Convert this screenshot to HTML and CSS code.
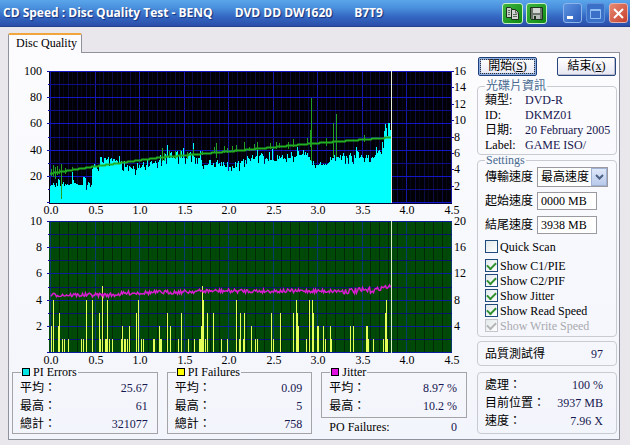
FILE: index.html
```html
<!DOCTYPE html>
<html lang="zh-Hant">
<head>
    <meta charset="UTF-8">
    <title>CD Speed : Disc Quality Test</title>
    <link rel="stylesheet" href="styles.css">
</head>
<body>
<div class="window">
    <header class="titlebar">
        <h1><span>CD Speed : Disc Quality Test - BENQ</span><span>DVD DD DW1620</span><span>B7T9</span></h1>
        <div class="tools">
            <button type="button" class="tool" aria-label="Copy">
                <svg width="15" height="15" viewBox="0 0 15 15">
                    <path d="M1.500 1.500h4l2 2v8h-6z" fill="#c9cdc9" stroke="#1d331d"/>
                    <path d="M6.500 3.500h4l3 3v7h-7z" fill="#d4d6d4" stroke="#1d331d"/>
                    <path d="M3 4.500h2M3 6.500h2M3 8.500h2M8 8.500h4M8 10.500h4M10.500 4v3h3" fill="none" stroke="#5c6a5c"/>
                </svg>
            </button>
            <button type="button" class="tool" aria-label="Save">
                <svg width="15" height="15" viewBox="0 0 15 15">
                    <path d="M1.500 1.500h12v12h-11l-1-1z" fill="#6c756c" stroke="#1d331d"/>
                    <path d="M4 2h7v5H4z" fill="#d4d6d4"/>
                    <path d="M4 9h7v4H4z" fill="#b9bdb9"/>
                    <path d="M5 10h2v3H5z" fill="#1d331d"/>
                </svg>
            </button>
        </div>
        <div class="controls">
            <button type="button" class="ctl" aria-label="Minimize">
                <svg width="17" height="17" viewBox="0 0 17 17"><path d="M3 11h6v3H3z" fill="#fff"/></svg>
            </button>
            <button type="button" class="ctl max" aria-label="Maximize">
                <svg width="17" height="17" viewBox="0 0 17 17"><path d="M3.500 4.500h10v9h-10zM3 5.500h11" fill="none" stroke="#8fbdf2"/></svg>
            </button>
            <button type="button" class="ctl close" aria-label="Close">
                <svg width="17" height="17" viewBox="0 0 17 17"><path d="M4 4l9 9M13 4l-9 9" stroke="#fff" stroke-width="2"/></svg>
            </button>
        </div>
    </header>

    <nav class="tabs"><a href="#panel">Disc Quality</a></nav>

    <main class="panel" id="panel">
        <section class="left">
            <svg id="chart" viewBox="0 0 455 312"></svg>
            <div class="stats">
                <fieldset>
                    <legend><i class="key cyan"></i>PI Errors</legend>
                    <dl>
                        <div><dt>平均：</dt><dd>25.67</dd></div>
                        <div><dt>最高：</dt><dd>61</dd></div>
                        <div><dt>總計：</dt><dd>321077</dd></div>
                    </dl>
                </fieldset>
                <fieldset>
                    <legend><i class="key yellow"></i>PI Failures</legend>
                    <dl>
                        <div><dt>平均：</dt><dd>0.09</dd></div>
                        <div><dt>最高：</dt><dd>5</dd></div>
                        <div><dt>總計：</dt><dd>758</dd></div>
                    </dl>
                </fieldset>
                <div>
                    <fieldset class="jitter">
                        <legend><i class="key pink"></i>Jitter</legend>
                        <dl>
                            <div><dt>平均：</dt><dd>8.97 %</dd></div>
                            <div><dt>最高：</dt><dd>10.2 %</dd></div>
                        </dl>
                    </fieldset>
                    <dl class="po">
                        <div><dt>PO Failures:</dt><dd>0</dd></div>
                    </dl>
                </div>
            </div>
        </section>

        <aside class="side">
            <div class="buttons">
                <button type="button" class="btn default">開始(<u>S</u>)</button>
                <button type="button" class="btn">結束(<u>x</u>)</button>
            </div>
            <fieldset class="group info">
                <legend>光碟片資訊</legend>
                <dl>
                    <dt>類型:</dt><dd>DVD-R</dd>
                    <dt>ID:</dt><dd>DKMZ01</dd>
                    <dt>日期:</dt><dd>20 February 2005</dd>
                    <dt>Label:</dt><dd>GAME ISO/</dd>
                </dl>
            </fieldset>
            <fieldset class="group settings">
                <legend>Settings</legend>
                <div class="field">
                    <label for="speed">傳輸速度</label>
                    <div class="select">
                        <select id="speed"><option>最高速度</option></select>
                        <span class="arrow"><svg width="9" height="7" viewBox="0 0 9 7"><path d="M1 1l3.500 3.500L8 1" fill="none" stroke="#4d6185" stroke-width="2"/></svg></span>
                    </div>
                </div>
                <div class="field">
                    <label for="start">起始速度</label>
                    <input type="text" id="start" value="0000 MB">
                </div>
                <div class="field">
                    <label for="end">結尾速度</label>
                    <input type="text" id="end" value="3938 MB">
                </div>
                <label class="check quick"><input type="checkbox">Quick Scan</label>
                <label class="check"><input type="checkbox" checked>Show C1/PIE</label>
                <label class="check"><input type="checkbox" checked>Show C2/PIF</label>
                <label class="check"><input type="checkbox" checked>Show Jitter</label>
                <label class="check"><input type="checkbox" checked>Show Read Speed</label>
                <label class="check off"><input type="checkbox" checked disabled>Show Write Speed</label>
            </fieldset>
            <dl class="group score">
                <div><dt>品質測試得</dt><dd>97</dd></div>
            </dl>
            <dl class="group progress">
                <div><dt>處理：</dt><dd>100 %</dd></div>
                <div><dt>目前位置：</dt><dd>3937 MB</dd></div>
                <div><dt>速度：</dt><dd>7.96 X</dd></div>
            </dl>
        </aside>
    </main>
</div>
<script src="chart.js"></script>
</body>
</html>
```
FILE: styles.css
```css
*{
    margin: 0;
    padding: 0;
    box-sizing: border-box;
}
body{
    font: 12px/14px "Liberation Serif", "Noto Sans CJK TC", serif;
    color: #000;
    background: #e9e7ec;
}
button, input, select{
    font: inherit;
    color: inherit;
}
fieldset{
    min-width: 0;
}
.window{
    min-height: 100vh;
    border-bottom: 1px solid #2f3d94;
}

/* title bar */
.titlebar{
    display: flex;
    align-items: center;
    height: 27px;
    padding: 0 2px 0 3px;
    background: linear-gradient(#5aa5ea, #4a90dd 30%, #3467c2 65%, #2a4da8);
    border-bottom: 1px solid #25408f;
}
.titlebar h1{
    display: flex;
    flex: 1;
    gap: 22px;
    font: bold 12px/20px "Open Sans", sans-serif;
    color: #fff;
    white-space: nowrap;
    text-shadow: 1px 1px 1px #14317c;
}
.tools, .controls{
    display: flex;
    gap: 3px;
}
.tools{
    margin-right: 16px;
}
.controls{
    gap: 4px;
}
.tool, .ctl{
    display: flex;
    align-items: center;
    justify-content: center;
    width: 21px;
    height: 21px;
    border: 1px solid #c8f0c8;
    border-radius: 3px;
    background: linear-gradient(135deg, #3fb53f, #0d8a12);
}
.ctl{
    width: 19px;
    height: 20px;
    border-color: #8db4ea;
    background: linear-gradient(135deg, #5c93e0, #2b5bba);
}
.ctl.max{
    border-color: #5f8fd8;
    background: #3a70c8;
}
.ctl.close{
    border-color: #e3b0b0;
    background: linear-gradient(135deg, #e58a72, #c8402c);
}

/* tab + panel */
.tabs{
    display: flex;
    padding: 6px 0 0 8px;
}
.tabs a{
    position: relative;
    z-index: 1;
    height: 20px;
    margin-bottom: -1px;
    padding: 1px 4px 0 7px;
    border: 1px solid #8f929c;
    border-top: 2px solid #f0a63c;
    border-bottom: 0;
    border-radius: 2px 2px 0 0;
    background: #fcfcfe;
    color: #000;
    line-height: 15px;
    text-decoration: none;
}
.panel{
    display: grid;
    grid-template-columns: 1fr 140px;
    gap: 10px;
    margin: 0 10px 6px 8px;
    padding: 0 2px 3px 3px;
    border: 1px solid #8f929c;
    background: linear-gradient(#fcfcfe, #f3f5fc);
}
#chart{
    display: block;
    width: 100%;
    overflow: visible;
}
#chart text{
    font-size: 12px;
}

/* results under the charts */
.stats{
    display: grid;
    grid-template-columns: repeat(3, 1fr);
    align-items: start;
    gap: 9px;
}
.stats fieldset{
    border: 1px solid #a3a3a8;
}
.stats legend{
    display: flex;
    align-items: center;
    gap: 3px;
    margin-left: 8px;
    padding: 0 1px;
}
.key{
    width: 8px;
    height: 8px;
    border: 1px solid #000;
}
.cyan{ background: #00e4e4; }
.yellow{ background: #ff0; }
.pink{ background: #e010e0; }
.stats dl, .progress, .score{
    line-height: 18px;
}
.stats dl{
    padding: 0 9px 0 7px;
}
.stats dl div, .progress div, .score div{
    display: flex;
    justify-content: space-between;
}
.stats .jitter{
    padding-bottom: 2px;
}
.stats .po{
    padding: 0 10px 0 8px;
}
dd{
    color: #17174f;
}

/* right column */
.side{
    padding-top: 4px;
}
.buttons{
    display: flex;
    justify-content: space-between;
    padding: 0 1px;
}
.btn{
    width: 59px;
    height: 19px;
    border: 1px solid #26457c;
    border-radius: 2px;
    background: linear-gradient(#fff, #e6e6f2);
    box-shadow: inset -1px -1px #b9bccf;
    line-height: 15px;
}
.btn.default{
    border-color: #1f3f7c;
    box-shadow: inset 0 0 0 2px #8fb0e0;
    outline: 1px dotted #333;
    outline-offset: -3px;
}
.group{
    border: 1px solid #c9cbd3;
    border-radius: 4px;
    padding: 0 7px;
}
.group legend{
    padding: 0 1px;
    color: #48698f;
}
.info{
    margin-top: 3px;
    padding-bottom: 1px;
}
.info dl{
    display: grid;
    grid-template-columns: 40px 1fr;
    line-height: 15px;
    white-space: nowrap;
}
.settings{
    margin-top: -2px;
    padding-bottom: 3px;
}
.field{
    display: flex;
    align-items: center;
    height: 20px;
    margin-bottom: 4px;
}
.field label{
    width: 52px;
}
.field input{
    width: 60px;
    height: 18px;
    padding: 0 3px;
    border: 1px solid #9a9aa0;
    background: #fff;
}
.select{
    position: relative;
    width: 71px;
}
.select select{
    display: block;
    appearance: none;
    width: 100%;
    height: 20px;
    padding: 0 0 0 3px;
    border: 1px solid #9a9aa0;
    border-radius: 0;
    background: #fff;
}
.arrow{
    position: absolute;
    top: 1px;
    right: 1px;
    display: flex;
    align-items: center;
    justify-content: center;
    width: 16px;
    height: 18px;
    border: 1px solid #9fb2d4;
    background: linear-gradient(#dfe8fa, #b8c9ea);
    pointer-events: none;
}
.check{
    display: flex;
    align-items: center;
    gap: 2px;
    height: 15px;
    white-space: nowrap;
}
.check.quick{
    margin-bottom: 4px;
}
.check input{
    appearance: none;
    display: grid;
    place-items: center;
    width: 13px;
    height: 13px;
    border: 1px solid #1f4a7c;
    background: linear-gradient(135deg, #e2e8ea, #fff);
}
.check input:checked::after{
    content: "";
    width: 7px;
    height: 4px;
    margin-bottom: 2px;
    border: solid #2f8f2f;
    border-width: 0 0 2px 2px;
    transform: rotate(-45deg);
}
.check.off{
    color: #a9a9ae;
}
.check.off input{
    border-color: #c4c4ca;
}
.check.off input::after{
    border-color: #b4b4b8;
}
.score{
    margin-top: 4px;
    padding: 3px 13px 2px 7px;
}
.progress{
    margin-top: 6px;
    padding: 3px 13px 3px 7px;
}
```
FILE: chart.js
```js
var svg=document.getElementById('chart');
var X0=38, STEP=89, RIGHT=440, END=379;

function add(name, attrs, text){
    var el=document.createElementNS('http://www.w3.org/2000/svg', name);
    for(var k in attrs){
        el.setAttribute(k, attrs[k]);
    }
    if(text!==undefined){
        el.textContent=text;
    }
    svg.appendChild(el);
}
function rect(x, y, w, h, fill){
    add('rect', {x:x, y:y, width:w, height:h, fill:fill});
}
function label(x, y, text, anchor){
    add('text', {x:x, y:y, 'text-anchor':anchor}, text);
}
function path(d, color){
    add('path', {d:d, fill:'none', stroke:color});
}
// repeatable noise, 0..1
var seed=7;
function rnd(){
    seed=(seed*16807)%2147483647;
    return seed/2147483647;
}
// value at x on a polyline [[x,y],...]
function at(pts, x){
    for(var i=1; i<pts.length; i++){
        if(x<=pts[i][0]){
            var a=pts[i-1], b=pts[i];
            return a[1]+(b[1]-a[1])*(x-a[0])/(b[0]-a[0]);
        }
    }
    return pts[pts.length-1][1];
}
// plot background, grid and axis labels
function frame(o){
    var i, x, y;
    rect(X0-1, o.top, RIGHT-X0+1, 132, o.bg);
    for(i=0; i<=90; i++){
        x=Math.round(X0+i*STEP/20);
        if(x<RIGHT){
            rect(x, o.top, 1, 132, i%10==0 ? o.major : i%2==0 ? o.minor : o.faint);
        }
    }
    for(i=0; i<=10; i++){
        y=o.top+Math.round(i*13.1);
        rect(X0-1, y, RIGHT-X0+1, 1, i%2==0 ? o.row : o.rowMinor);
        rect(X0-(i%2==0 ? 3 : 2), y, 2, 1, '#1010a0');
    }
    for(i=0; i<5; i++){
        label(30, o.top+4+Math.round(i*26.2), o.left[i], 'end');
    }
    for(i=0; i<o.right.length; i++){
        y=o.top+Math.round(i*131/o.right.length);
        label(442, y+4, o.right[i], 'start');
        if(o.ticks){
            rect(RIGHT, y, 2, 1, '#1010a0');
        }
    }
    for(i=0; i<=9; i++){
        label(Math.round(X0+1+i*STEP/2), o.top+143, (i/2).toFixed(1), 'middle');
    }
}

/* PI errors + read speed */
frame({
    top:18, bg:'#000006', major:'#1818a0', minor:'#0c0c44', faint:'#06061c',
    row:'#1414c8', rowMinor:'#0e0e88', ticks:true,
    left:[100,80,60,40,20], right:[16,14,12,10,8,6,4,2]
});
var env=[[38,15],[79,16],[80,28],[92,33],[103,34],[112,30],[126,27],[140,31],[154,36],[170,36],[188,36],
    [190,30],[222,29],[236,33],[245,37],[262,34],[280,37],[296,38],[300,31],[314,31],[320,36],[345,36],
    [362,36],[366,42],[371,44],[372,57],[379,58]];
var spikes={60:24,72:20,155:44,159:39,171:42,181:46,188:40,245:44,260:41,285:43,299:45,344:43,373:60,376:61};
var d='';
for(var x=X0; x<END; x++){
    var v=spikes[x] || at(env, x)-2+Math.floor(rnd()*rnd()*8)-(rnd()<0.15 ? 4 : 0);
    var h=Math.round(v*1.31);
    d+='M'+(x+0.5)+' 150v-'+h;
}
path(d, '#00ffff');

var speed=[[38,120],[83,113],[148,104],[228,97],[301,90],[379,84]];
d='M38 120.5';
for(x=39; x<=END; x++){
    d+='L'+x+' '+(Math.round(at(speed, x))+0.5);
}
add('path', {d:d, fill:'none', stroke:'#22b022', 'stroke-width':2});
// [x, top, bottom] of the dips and peaks
var peaks=[[39,116,123],[41,112,124],[43,114,126],[45,113,122],[47,116,121],[49,111,146],[53,115,121],[60,114,118],
    [150,95,108],[152,100,108],[157,98,104],[163,98,106],[168,97,105],[175,99,106],[181,96,103],[190,98,102],
    [202,94,100],[204,90,105],[212,93,100],[215,95,100],[220,93,99],[224,92,99],[232,89,97],[237,94,98],
    [242,91,97],[245,89,97],[258,90,96],[264,89,96],[267,90,95],[276,89,96],[281,86,94],[295,85,92],[298,77,94],
    [299,45,108],[314,85,93],[321,70,104],[324,61,104],[352,82,89]];
d='';
for(var i=0; i<peaks.length; i++){
    d+='M'+(peaks[i][0]+0.5)+' '+peaks[i][1]+'V'+peaks[i][2];
}
path(d, '#22a022');
rect(END, 18, 1, 132, '#e8f0d8');
rect(X0-1, 150, RIGHT-X0+1, 1, '#000030');

/* PI failures + jitter */
frame({
    top:168, bg:'#004a08', major:'#0a3c70', minor:'#032808', faint:'#05420c',
    row:'#0a1ca0', rowMinor:'#081470',
    left:[10,8,6,4,2], right:[20,16,12,8,4]
});
var pif=[[39,2],[41,4],[46,2],[47,3],[50,1],[52,1],[56,1],[69,1],[71,1],[74,4],[80,4],[87,3],[88,1],[90,5],
    [93,1],[94,1],[95,4],[97,1],[100,1],[109,1],[110,2],[112,1],[113,1],[115,1],[117,2],[124,3],[126,4],
    [129,1],[131,1],[141,1],[142,1],[147,2],[148,1],[149,1],[155,3],[158,2],[166,1],[169,3],[176,1],[182,1],
    [187,1],[188,1],[189,2],[190,5],[191,4],[193,1],[195,3],[201,3],[209,1],[215,1],[224,4],[227,1],[228,3],
    [231,1],[232,3],[239,2],[243,1],[245,1],[259,3],[261,1],[268,3],[281,3],[284,4],[285,3],[286,2],[294,1],
    [297,4],[300,4],[301,3],[305,2],[306,2],[311,2],[313,1],[318,2],[319,1],[338,2],[341,2],[354,2],[355,2],
    [356,1],[361,1],[371,1],[373,3],[374,4],[375,1]];
for(i=0; i<pif.length; i++){
    h=Math.round(pif[i][1]*13.1);
    rect(pif[i][0], 299-h, 1, h, '#e4ff58');
}
var jitter=[[38,242],[100,242],[115,240],[170,239],[190,238],[240,238],[340,238],[362,237],[372,234],[379,234]];
d='';
for(x=X0; x<END; x++){
    var n=x>330 && x<362 ? 6 : 4;
    var y=at(jitter, x)-n/2+rnd()*n;
    d+=(d ? 'L' : 'M')+(x+0.5)+' '+y.toFixed(1);
}
add('path', {d:d, fill:'none', stroke:'#d81cd0', 'stroke-width':1.5});
rect(END, 168, 1, 132, '#d8f0c0');
```
